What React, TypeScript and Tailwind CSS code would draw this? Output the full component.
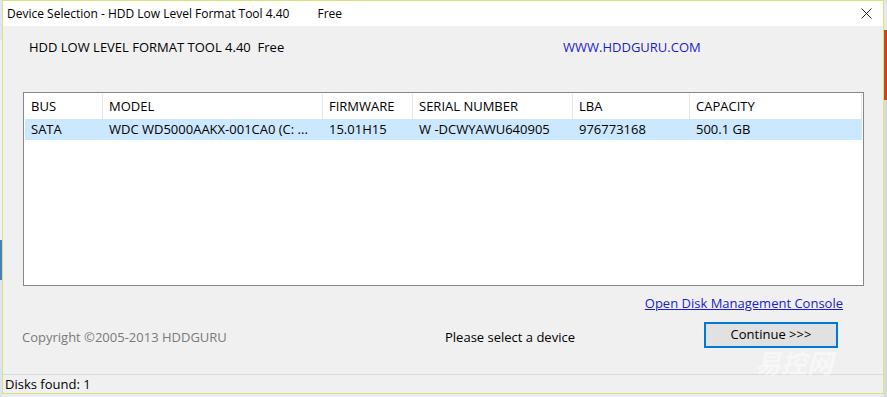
import React from "react";

const columns = [
  { title: "BUS", width: "w-[78px]" },
  { title: "MODEL", width: "w-[220px]" },
  { title: "FIRMWARE", width: "w-[90px]" },
  { title: "SERIAL NUMBER", width: "w-[160px]" },
  { title: "LBA", width: "w-[117px]" },
  { title: "CAPACITY", width: "flex-1" },
];

const disks = [
  ["SATA", "WDC WD5000AAKX-001CA0 (C: ...", "15.01H15", "W -DCWYAWU640905", "976773168", "500.1 GB"],
];

export default function App() {
  return (
    <div className="w-[887px] h-[397px] overflow-hidden flex bg-[#e9eef0] text-[12px] text-black font-['Segoe_UI','Open_Sans',sans-serif]">
      <div className="w-[2px] shrink-0 flex flex-col">
        <div className="h-[40px] bg-[#dfe8ee]" />
        <div className="h-[200px] bg-[#eef2f4]" />
        <div className="h-[40px] bg-[#4a7fb8]" />
        <div className="flex-1 bg-[#dde6ec]" />
      </div>

      <div className="w-[882px] h-[394px] shrink-0 border border-[#dbe27c] flex flex-col bg-[#f0f0f0]">
        {/* title bar */}
        <div className="h-[25px] shrink-0 bg-white flex items-center pl-[4px] pr-[11px]">
          <span className="whitespace-pre">Device Selection - HDD Low Level Format Tool 4.40         Free</span>
          <svg className="ml-auto" width="11" height="11" viewBox="0 0 11 11">
            <path d="M0.5 0.5L10.5 10.5M10.5 0.5L0.5 10.5" stroke="#222" strokeWidth="1" />
          </svg>
        </div>

        {/* header */}
        <div className="h-[42px] shrink-0 flex items-center pl-[26px] pt-[1px] text-[13px]">
          <span className="w-[534px] whitespace-pre">HDD LOW LEVEL FORMAT TOOL 4.40  Free</span>
          <a className="text-[#1b1bd0]">WWW.HDDGURU.COM</a>
        </div>

        {/* device list */}
        <div className="mt-[24px] ml-[20px] w-[841px] h-[194px] shrink-0 border border-[#828790] bg-white p-px flex flex-col text-[13px]">
          <div className="h-[25px] flex">
            {columns.map((c) => (
              <div key={c.title} className={`${c.width} border-r border-[#e5e5e5] flex items-center pl-[6px]`}>
                {c.title}
              </div>
            ))}
          </div>
          {disks.map((d, i) => (
            <div key={i} className="h-[21px] flex bg-[#cce8ff]">
              {d.map((v, j) => (
                <div key={j} className={`${columns[j].width} flex items-center pl-[6px] whitespace-nowrap`}>
                  {v}
                </div>
              ))}
            </div>
          ))}
        </div>

        {/* link */}
        <div className="h-[36px] shrink-0 flex items-center justify-end pr-[40px]">
          <a className="underline text-[#1b1bd0] text-[13px]">Open Disk Management Console</a>
        </div>

        {/* footer row */}
        <div className="flex items-start text-[13px]">
          <span className="ml-[19px] w-[423px] mt-[6px] text-[#7a7a7a]">Copyright ©2005-2013 HDDGURU</span>
          <span className="w-[259px] mt-[6px]">Please select a device</span>
          <button className="w-[134px] h-[26px] border-2 border-[#0078d7] bg-[#e1e1e1]">
            Continue &gt;&gt;&gt;
          </button>
        </div>

        {/* status bar */}
        <div className="mt-auto relative border-t border-[#dadada] h-[19px] shrink-0 flex items-center pl-[2px] pt-[2px]">
          <span className="text-[13px]">Disks found: 1</span>
          <span className="absolute right-[50px] -top-[26px] text-[26px] leading-none font-bold italic text-white/50 font-['Noto_Sans_CJK_SC',sans-serif]">
            易控网
          </span>
        </div>
      </div>

      <div className="flex-1 flex flex-col">
        <div className="h-[30px] bg-[#e8e8e8]" />
        <div className="h-[70px] bg-[#c8431e]" />
        <div className="flex-1 bg-[#d4dcd8]" />
      </div>
    </div>
  );
}
